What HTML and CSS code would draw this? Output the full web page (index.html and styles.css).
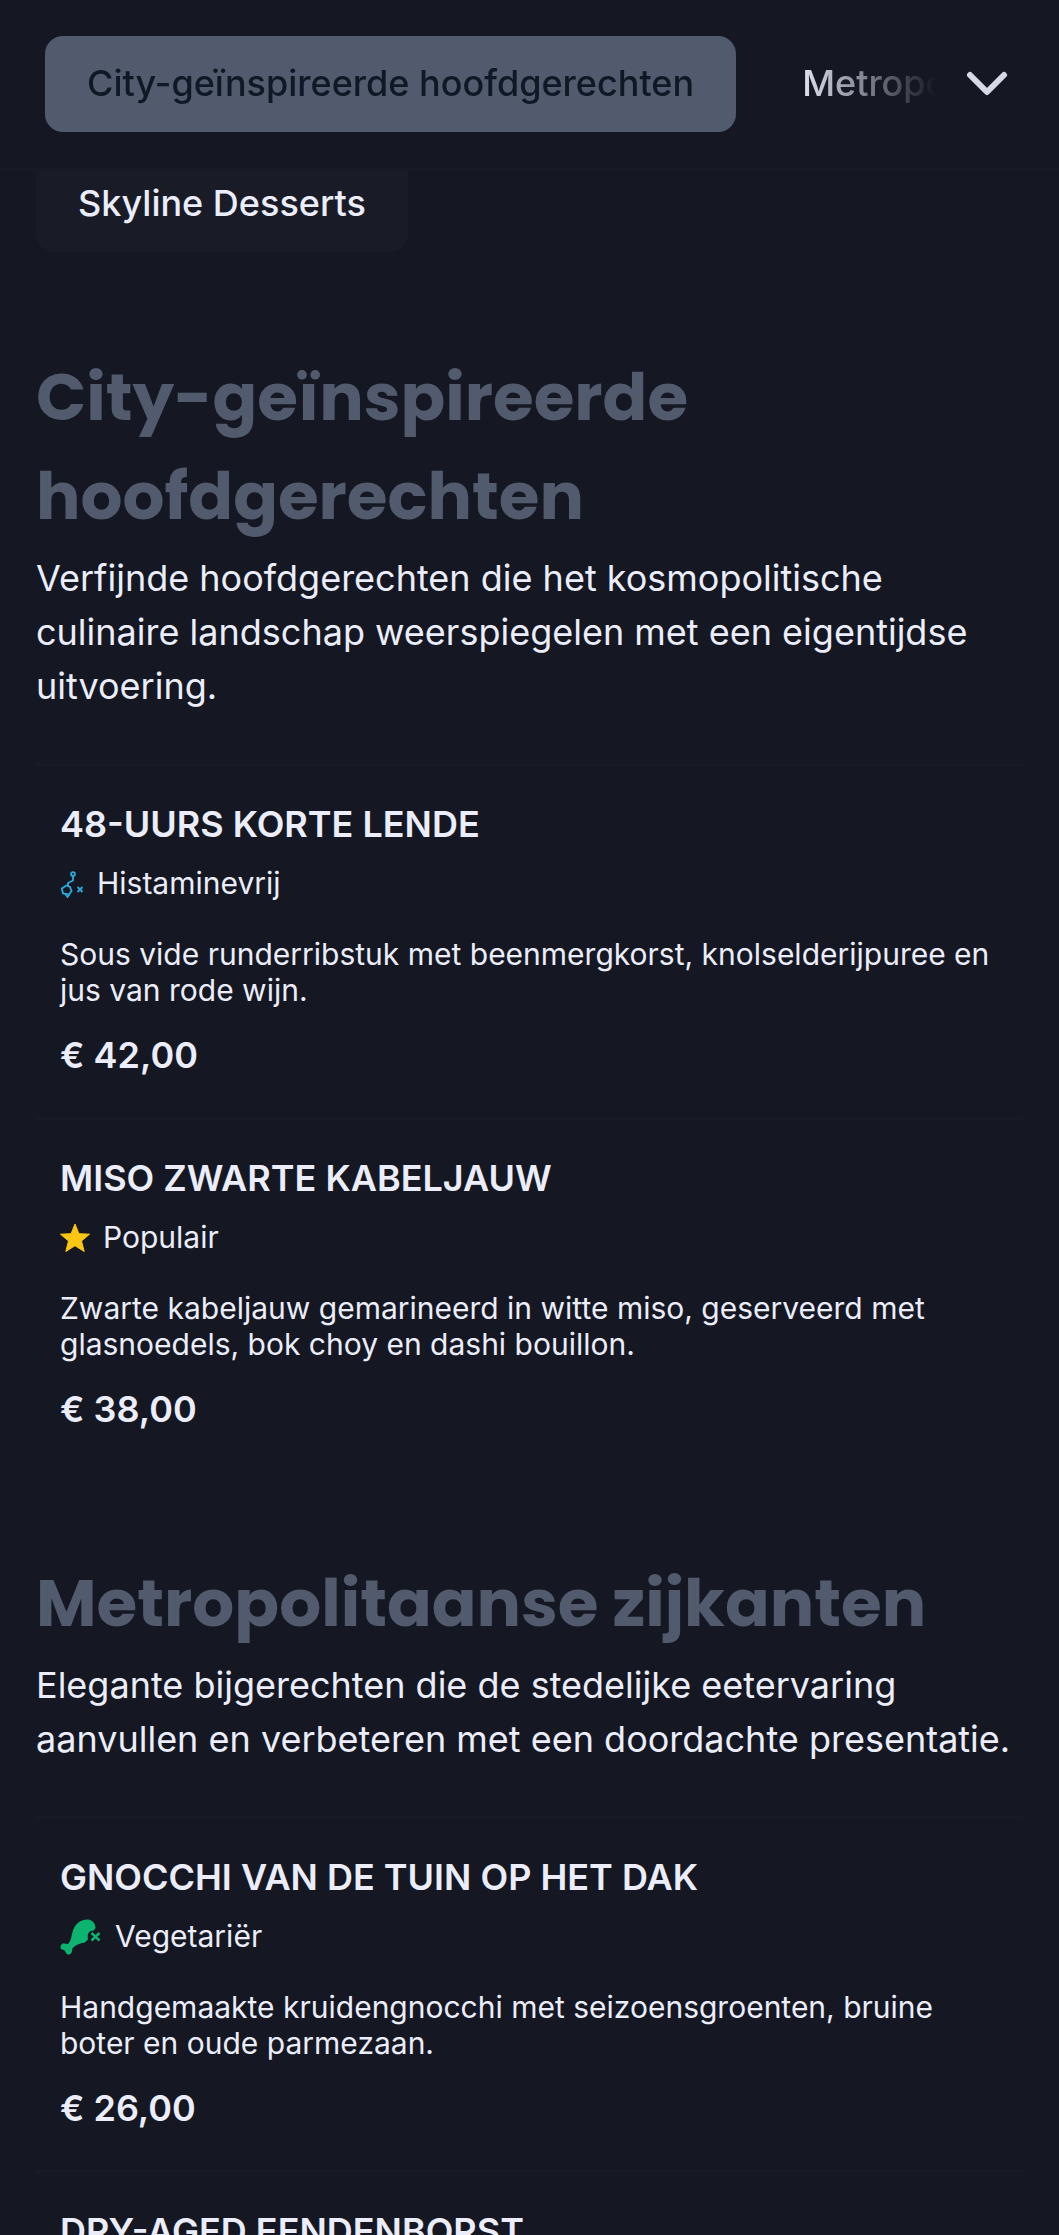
FILE: index.html
```html
<!DOCTYPE html>
<html lang="nl">
<head>
  <meta charset="UTF-8" />
  <meta name="viewport" content="width=device-width, initial-scale=1.0" />
  <title>Menu</title>
  <link rel="stylesheet" href="styles.css">
</head>
<body>
  <header class="topbar">
    <nav class="topbar-nav">
      <a class="pill active" href="#hoofdgerechten">City-geïnspireerde hoofdgerechten</a>
      <a class="pill" href="#zijkanten">Metropolitaanse zijkanten</a>
    </nav>
    <button class="toggle" type="button" aria-label="Alle categorieën">
      <svg width="42" height="26" viewBox="0 0 42 26" fill="none" stroke="currentColor" stroke-width="6" stroke-linecap="round" stroke-linejoin="round">
        <path d="M4 4 L21 21 L38 4" />
      </svg>
    </button>
  </header>

  <main class="menu">
    <div class="chips">
      <a class="pill chip" href="#desserts">Skyline Desserts</a>
    </div>

    <section class="category" id="hoofdgerechten">
      <h2>City-geïnspireerde hoofdgerechten</h2>
      <p class="intro">Verfijnde hoofdgerechten die het kosmopolitische culinaire landschap weerspiegelen met een eigentijdse uitvoering.</p>

      <article class="dish">
        <h3>48-uurs korte lende</h3>
        <div class="label">
          <svg class="histamine" width="24" height="28" viewBox="0 0 24 28" fill="none" stroke="currentColor" stroke-width="1.900">
            <circle cx="13" cy="4" r="1.900" />
            <path d="M13 6 V10.500 L8 13 V16" />
            <path d="M6.500 15.500 L10 17 L11.500 21 L9 24.500 L3 23.500 L1.800 18.500 Z" />
            <path d="M5.500 24 L7.500 27 L9.500 24.500" />
            <path d="M17.500 17 L22.500 22 M22.500 17 L17.500 22" />
          </svg>
          <span>Histaminevrij</span>
        </div>
        <p>Sous vide runderribstuk met beenmergkorst, knolselderijpuree en jus van rode wijn.</p>
        <div class="price">€ 42,00</div>
      </article>

      <article class="dish">
        <h3>Miso zwarte kabeljauw</h3>
        <div class="label">
          <svg class="star" width="30" height="30" viewBox="0 0 30 30" fill="currentColor" stroke="currentColor" stroke-linejoin="round">
            <path d="M15 1 L18.900 10.700 L29.500 11.200 L21.500 18 L24.200 28.500 L15 22.700 L5.800 28.500 L8.500 18 L0.500 11.200 L11.100 10.700 Z" />
          </svg>
          <span>Populair</span>
        </div>
        <p>Zwarte kabeljauw gemarineerd in witte miso, geserveerd met glasnoedels, bok choy en dashi bouillon.</p>
        <div class="price">€ 38,00</div>
      </article>
    </section>

    <section class="category" id="zijkanten">
      <h2>Metropolitaanse zijkanten</h2>
      <p class="intro">Elegante bijgerechten die de stedelijke eetervaring aanvullen en verbeteren met een doordachte presentatie.</p>

      <article class="dish">
        <h3>Gnocchi van de tuin op het dak</h3>
        <div class="label">
          <svg class="veggie" width="42" height="36" viewBox="0 0 42 36" fill="currentColor">
            <path d="M19 3 C25 -1 34 -1 35.500 8 C35.500 10 34 12 31 12 C28 13 27 16 28 20 C27 22 25 24 22 24 C18 25 14 27 12 30 C13 33 10 37 7 35 C5 34 6 32 4 31 C1 31 -1 28 2 25 C4 24 6 25 8 25 C11 22 11 19 12 15 C13 10 15 6 19 3 Z" />
            <path d="M31.500 14 L39.500 21.500 M39.500 14 L31.500 21.500" fill="none" stroke="currentColor" stroke-width="2.400" />
          </svg>
          <span>Vegetariër</span>
        </div>
        <p>Handgemaakte kruidengnocchi met seizoensgroenten, bruine boter en oude parmezaan.</p>
        <div class="price">€ 26,00</div>
      </article>

      <article class="dish">
        <h3>Dry-aged eendenborst</h3>
      </article>
    </section>
  </main>
</body>
</html>
```
FILE: styles.css
```css
* {
  box-sizing: border-box;
}

body {
  margin: 0;
  background: #151822;
  color: #ebedfb;
  font-family: Inter, sans-serif;
  font-size: 36px;
  line-height: 54px;
}

h2, h3, p {
  margin: 0;
}

.topbar {
  position: fixed;
  top: 0;
  left: 0;
  right: 0;
  display: flex;
  align-items: center;
  padding: 36px 36px 36px 45px;
  background: #151822;
  border-bottom: 3px solid #181b25;
}

.topbar-nav {
  flex: 1;
  min-width: 0;
  display: flex;
  gap: 24px;
  overflow: hidden;
  -webkit-mask-image: linear-gradient(to right, #000 calc(100% - 140px), transparent);
  mask-image: linear-gradient(to right, #000 calc(100% - 140px), transparent);
}

.pill {
  flex: none;
  padding: 20px 42px 22px;
  border-radius: 18px;
  color: inherit;
  font-weight: 500;
  text-decoration: none;
  white-space: nowrap;
}

.pill.active {
  background: #515b6d;
  color: #101725;
}

.chip {
  background: #191c26;
}

.toggle {
  display: flex;
  padding: 24px 15px 24px 30px;
  border: none;
  background: none;
  color: #d6d9e6;
  cursor: pointer;
}

.menu {
  height: 100vh;
  padding: 156px 36px 0;
  overflow-y: auto;
  scrollbar-width: none;
}

.chips {
  display: flex;
  margin-bottom: 13px;
}

.category {
  padding-top: 83px;
}

.category h2 {
  margin-bottom: 5px;
  color: #515b6d;
  font-family: Poppins, Inter, sans-serif;
  font-size: 66px;
  font-weight: 700;
  line-height: 99px;
}

.intro {
  margin-bottom: 50px;
}

.dish {
  padding: 31px 24px 35px;
  border-top: 3px solid #181b25;
}

.dish h3 {
  font-size: 36px;
  font-weight: 600;
  text-transform: uppercase;
}

.dish p {
  margin: 30px 0 20px;
  font-size: 30px;
  line-height: 36px;
}

.label {
  display: flex;
  align-items: center;
  gap: 13px;
  margin-top: 10px;
  font-size: 30px;
  line-height: 45px;
}

.histamine {
  color: #2ba6d8;
}

.star {
  color: #fcc612;
}

.veggie {
  color: #0cb470;
}

.price {
  font-weight: 600;
}
```
